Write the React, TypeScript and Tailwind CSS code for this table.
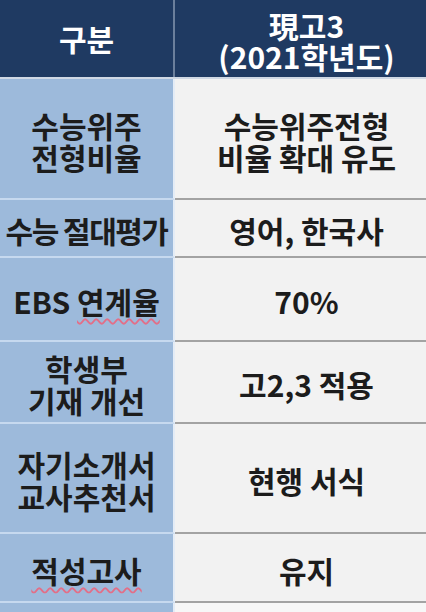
import React from 'react';

type Row = {
  label: React.ReactNode;
  value: React.ReactNode;
  height: string;
};

const squiggle = 'underline decoration-wavy decoration-[#e26f88] decoration-[1.5px] underline-offset-[4px]';

const rows: Row[] = [
  { label: <>수능위주<br />전형비율</>, value: <>수능위주전형<br />비율 확대 유도</>, height: 'h-[121px]' },
  { label: <span className="tracking-[-1.5px]">수능 절대평가</span>, value: '영어, 한국사', height: 'h-[58px]' },
  {
    label: <>EBS <span className={squiggle}>연계율</span></>,
    value: '70%',
    height: 'h-[84px]',
  },
  { label: <>학생부<br />기재 개선</>, value: '고2,3 적용', height: 'h-[82px]' },
  { label: <>자기소개서<br />교사추천서</>, value: '현행 서식', height: 'h-[110px]' },
  { label: <span className={squiggle}>적성고사</span>, value: '유지', height: 'h-[69px]' },
];

const App: React.FC = () => {
  return (
    <div
      className="w-[426px] h-[612px] overflow-hidden bg-[#f4f4f4] text-[#1c1c1c]"
      style={{ fontFamily: '"Noto Sans CJK KR", "Noto Sans", sans-serif' }}
    >
      {/* Header */}
      <div className="flex border-b-2 border-[#cfd8e4]">
        <div className="w-[175px] h-[77px] flex items-center justify-center bg-[#1f3a62] text-white text-[30px] font-bold leading-[31px] border-r-2 border-[#6b7f9c]">
          구분
        </div>
        <div className="flex-1 h-[77px] flex items-center justify-center pl-3 pt-1 bg-[#1f3a62] text-white text-[30px] font-bold leading-[31px] text-center">
          現고3<br />(2021학년도)
        </div>
      </div>

      {/* Body */}
      {rows.map((row, i) => (
        <div key={i} className={`flex ${row.height}`}>
          <div className="w-[175px] flex items-center justify-center text-center bg-[#9dbadb] border-b-2 border-[#c6d9ef] border-r-2 border-r-[#e4ecf6] text-[30px] font-bold leading-[32px] whitespace-nowrap">
            <div className="pt-1">{row.label}</div>
          </div>
          <div className="flex-1 flex items-center justify-center pl-3 text-center bg-[#f2f2f2] border-b-2 border-[#a3a3a3] text-[30px] font-bold leading-[32px]">
            <div className="pt-1">{row.value}</div>
          </div>
        </div>
      ))}
      <div className="flex h-[10px]">
        <div className="w-[175px] bg-[#9dbadb] border-r-2 border-[#e4ecf6]" />
        <div className="flex-1 bg-[#f7f7f7]" />
      </div>
    </div>
  );
};

export default App;
